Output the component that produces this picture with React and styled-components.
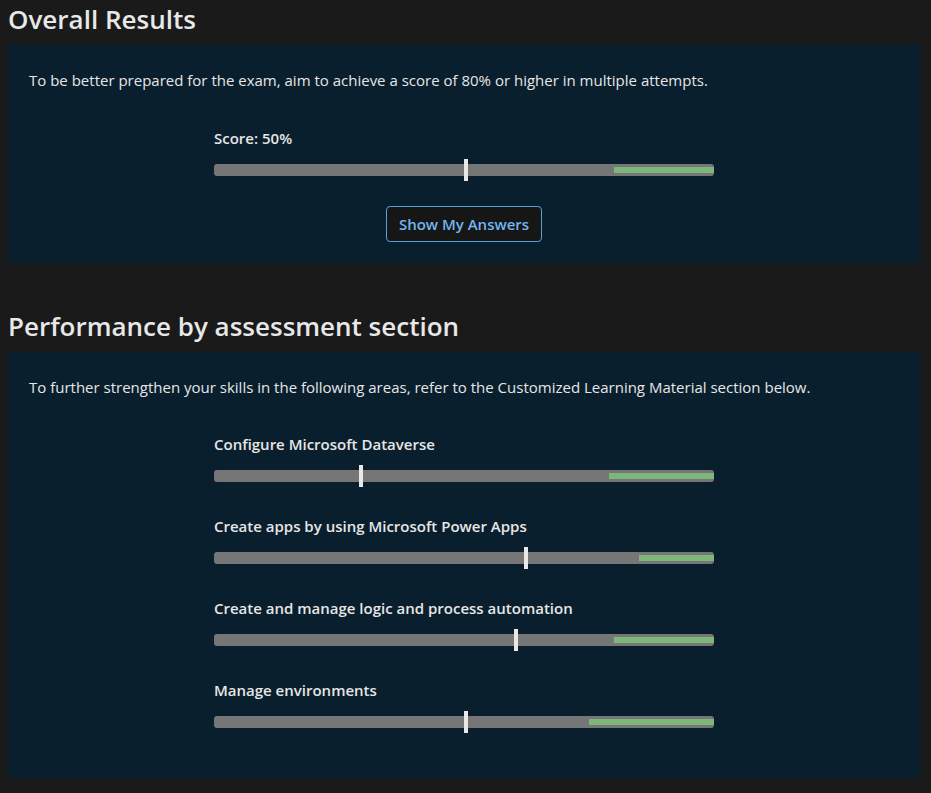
import React from "react";
import styled, { createGlobalStyle } from "styled-components";

const GlobalStyle = createGlobalStyle`
	body {
		margin: 0;
		background: #1a1a1a;
		color: #e6e6e6;
		font-family: "Open Sans", "Noto Sans", sans-serif;
	}
`;

const PageStyled = styled.div`
	padding: 0 11px 0 8px;
`;

const SectionTitle = styled.h2`
	margin: 0;
	padding: ${(p) => (p.$first ? "2px 0 9px" : "46px 0 9px")};
	font-size: 26px;
	line-height: 34px;
	font-weight: 600;
	color: #e8e8e8;
`;

const PanelStyled = styled.div`
	background: #0a1f2d;
	padding: 24px 21px 21px;
`;

const Intro = styled.p`
	margin: 0;
	font-size: 15px;
	line-height: 22px;
`;

const ScoreList = styled.div`
	width: 500px;
	margin: ${(p) => (p.$tail ? "36px" : "37px")} auto 0;
	display: flex;
	flex-direction: column;
	gap: 34px;
	padding-bottom: ${(p) => (p.$tail ? "29px" : "0")};
`;

const ScoreItem = styled.div`
	display: flex;
	flex-direction: column;
	gap: 16px;
`;

const ScoreLabel = styled.div`
	font-size: 15px;
	line-height: 20px;
	font-weight: 600;
	color: #e6e6e6;
`;

const BarTrack = styled.div`
	position: relative;
	height: 12px;
	border-radius: 3px;
	background: #767676;
`;

const PassZone = styled.div`
	position: absolute;
	right: 0;
	top: 3px;
	bottom: 3px;
	background: #7cb87b;
`;

const Marker = styled.div`
	position: absolute;
	top: -5px;
	width: 4px;
	height: 22px;
	background: #e8e8e8;
`;

const ButtonRow = styled.div`
	display: flex;
	justify-content: center;
	margin-top: 30px;
`;

const OutlineButton = styled.button`
	height: 36px;
	padding: 0 12px;
	background: #161616;
	border: 1px solid #5b9fd6;
	border-radius: 4px;
	color: #72b5f0;
	font-family: inherit;
	font-size: 15px;
	font-weight: 600;
	cursor: pointer;
`;

const sections = [
	{ name: "Configure Microsoft Dataverse", score: 29, pass: 79 },
	{ name: "Create apps by using Microsoft Power Apps", score: 62, pass: 85 },
	{ name: "Create and manage logic and process automation", score: 60, pass: 80 },
	{ name: "Manage environments", score: 50, pass: 75 },
];

const ScoreBar = ({ label, score, pass }) => (
	<ScoreItem>
		<ScoreLabel>{label}</ScoreLabel>
		<BarTrack>
			<PassZone style={{ left: `${pass}%` }} />
			<Marker style={{ left: `${score}%` }} />
		</BarTrack>
	</ScoreItem>
);

const App = () => {
	return (
		<PageStyled>
			<GlobalStyle />
			<SectionTitle $first>Overall Results</SectionTitle>
			<PanelStyled>
				<Intro>
					To be better prepared for the exam, aim to achieve a score of 80% or
					higher in multiple attempts.
				</Intro>
				<ScoreList>
					<ScoreBar label="Score: 50%" score={50} pass={80} />
				</ScoreList>
				<ButtonRow>
					<OutlineButton type="button">Show My Answers</OutlineButton>
				</ButtonRow>
			</PanelStyled>

			<SectionTitle>Performance by assessment section</SectionTitle>
			<PanelStyled>
				<Intro>
					To further strengthen your skills in the following areas, refer to the
					Customized Learning Material section below.
				</Intro>
				<ScoreList $tail>
					{sections.map((s) => (
						<ScoreBar
							key={s.name}
							label={s.name}
							score={s.score}
							pass={s.pass}
						/>
					))}
				</ScoreList>
			</PanelStyled>
		</PageStyled>
	);
};

export default App;
